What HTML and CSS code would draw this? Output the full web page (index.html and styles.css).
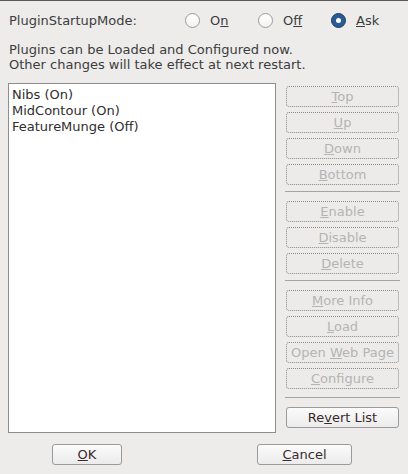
FILE: index.html
```html
<!DOCTYPE html>
<html>
<head>
<meta charset="utf-8">
<link rel="stylesheet" href="styles.css">
</head>
<body>
<div class="dialog">
  <div class="mode-row">
    <span class="mode-label">PluginStartupMode:</span>
    <div class="radios">
      <label class="radio"><span class="dot"></span><span>O<u>n</u></span></label>
      <label class="radio"><span class="dot"></span><span>O<u>f</u>f</span></label>
      <label class="radio"><span class="dot checked"></span><span><u>A</u>sk</span></label>
    </div>
  </div>
  <div class="info">Plugins can be Loaded and Configured now.<br>Other changes will take effect at next restart.</div>
  <div class="main">
    <div class="list">
      <div class="item">Nibs (On)</div>
      <div class="item">MidContour (On)</div>
      <div class="item">FeatureMunge (Off)</div>
    </div>
    <div class="side">
      <div class="group">
        <button class="btn off"><u>T</u>op</button>
        <button class="btn off"><u>U</u>p</button>
        <button class="btn off"><u>D</u>own</button>
        <button class="btn off"><u>B</u>ottom</button>
      </div>
      <div class="sep"></div>
      <div class="group">
        <button class="btn off"><u>E</u>nable</button>
        <button class="btn off"><u>D</u>isable</button>
        <button class="btn off"><u>D</u>elete</button>
      </div>
      <div class="sep"></div>
      <div class="group">
        <button class="btn off"><u>M</u>ore Info</button>
        <button class="btn off"><u>L</u>oad</button>
        <button class="btn off">Open <u>W</u>eb Page</button>
        <button class="btn off"><u>C</u>onfigure</button>
      </div>
      <div class="sep last"></div>
      <div class="group">
        <button class="btn">Re<u>v</u>ert List</button>
      </div>
    </div>
  </div>
  <div class="footer">
    <button class="btn ok"><u>O</u>K</button>
    <button class="btn cancel"><u>C</u>ancel</button>
  </div>
</div>
</body>
</html>
```

FILE: styles.css
```css
html, body {
  margin: 0;
  padding: 0;
  background: #edeceb;
}
body {
  width: 408px;
  height: 474px;
  overflow: hidden;
  font-family: "DejaVu Sans", sans-serif;
  font-size: 13px;
  color: #3c3c3c;
}
.dialog {
  border-top: 1px solid #5a5a5a;
  height: 473px;
  box-sizing: border-box;
}
.mode-row {
  display: flex;
  align-items: center;
  height: 38px;
  padding-left: 9px;
}
.mode-label {
  width: 176px;
}
.radios {
  display: flex;
}
.radio {
  display: flex;
  align-items: center;
  gap: 10px;
  width: 73px;
}
.dot {
  width: 13px;
  height: 13px;
  border-radius: 50%;
  border: 1px solid #9a9a9a;
  background: linear-gradient(#ffffff, #f2f2f2);
  display: inline-flex;
  align-items: center;
  justify-content: center;
}
.dot.checked {
  background: #2a5a92;
  border-color: #1c3e6a;
}
.dot.checked::after {
  content: "";
  width: 5px;
  height: 5px;
  border-radius: 50%;
  background: #ffffff;
}
.info {
  padding-left: 9px;
  line-height: 15px;
  margin-top: 3px;
}
.main {
  display: flex;
  margin-top: 11px;
  padding-left: 8px;
}
.list {
  background: #ffffff;
  border: 1px solid #8d8d8d;
  padding: 3px;
  box-sizing: border-box;
  width: 268px;
  height: 350px;
  color: #2e2e2e;
}
.item {
  line-height: 16px;
}
.side {
  margin-left: 9px;
  width: 115px;
  display: flex;
  flex-direction: column;
  padding-top: 3px;
}
.group {
  display: flex;
  flex-direction: column;
  gap: 5px;
  padding: 0 1px;
}
.sep {
  height: 1px;
  background: #a4a4a4;
  margin: 6px 0 9px;
}
.sep.last {
  margin: 8px 0 9px;
}
.btn {
  font-family: "DejaVu Sans", sans-serif;
  font-size: 13px;
  height: 21px;
  padding: 0;
  border: 1px solid #9a9a9a;
  border-radius: 3px;
  background: linear-gradient(#fbfbfb, #ebebeb);
  color: #3a2a2a;
  line-height: 19px;
  box-sizing: border-box;
}
.btn.off {
  border: 1px dotted #8a8a8a;
  color: #b4b4b4;
  background: #ecebea;
}
.footer {
  display: flex;
  margin-top: 11px;
}
.ok {
  margin-left: 52px;
  width: 70px;
}
.cancel {
  margin-left: 135px;
  width: 95px;
}
```
